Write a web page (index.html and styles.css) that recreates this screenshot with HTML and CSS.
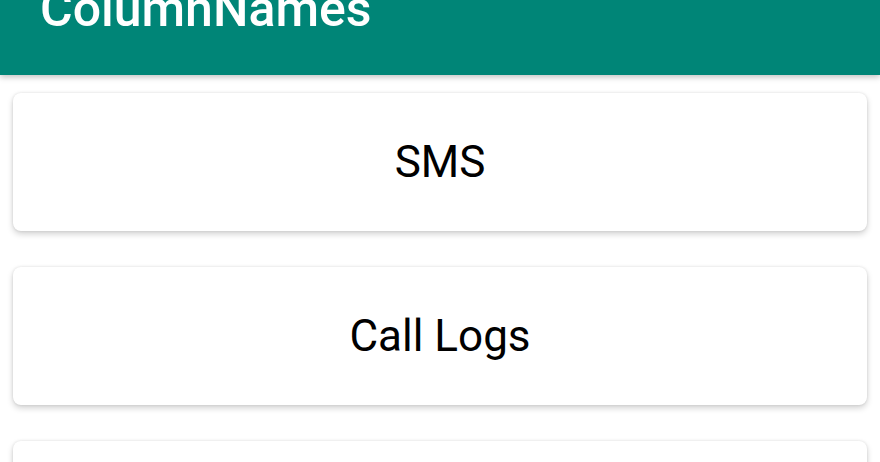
FILE: index.html
```html
<!DOCTYPE html>
<html lang="en">
<head>
    <meta charset="UTF-8">
    <meta name="viewport" content="width=device-width, initial-scale=1.0">
    <title>ColumnNames</title>
    <link rel="stylesheet" href="styles.css">
</head>
<body>
    <div class="app-bar">
        <h1 class="app-title">ColumnNames</h1>
    </div>

    <div class="card-list">
        <div class="card">SMS</div>
        <div class="card">Call Logs</div>
        <div class="card"></div>
    </div>
</body>
</html>
```

FILE: styles.css
```css
body {
    margin: 0;
    font-family: Roboto, "Noto Sans", sans-serif;
    background-color: #fff;
    overflow: hidden;
}
.app-bar {
    height: 75px;
    background-color: #008577;
    padding-left: 40px;
    overflow: hidden;
    box-shadow: 0 2px 6px rgba(0,0,0,0.25);
    position: relative;
    z-index: 1;
}
.app-title {
    margin: -16px 0 0 0;
    font-size: 50px;
    line-height: 50px;
    font-weight: 500;
    color: white;
}
.card-list {
    display: flex;
    flex-direction: column;
    gap: 36px;
    padding: 18px 13px;
}
.card {
    height: 138px;
    flex-shrink: 0;
    background-color: white;
    border-radius: 8px;
    box-shadow: 0 3px 6px rgba(0,0,0,0.18), 0 0 3px rgba(0,0,0,0.1);
    display: flex;
    align-items: center;
    justify-content: center;
    font-size: 44px;
    color: #000;
}
```
